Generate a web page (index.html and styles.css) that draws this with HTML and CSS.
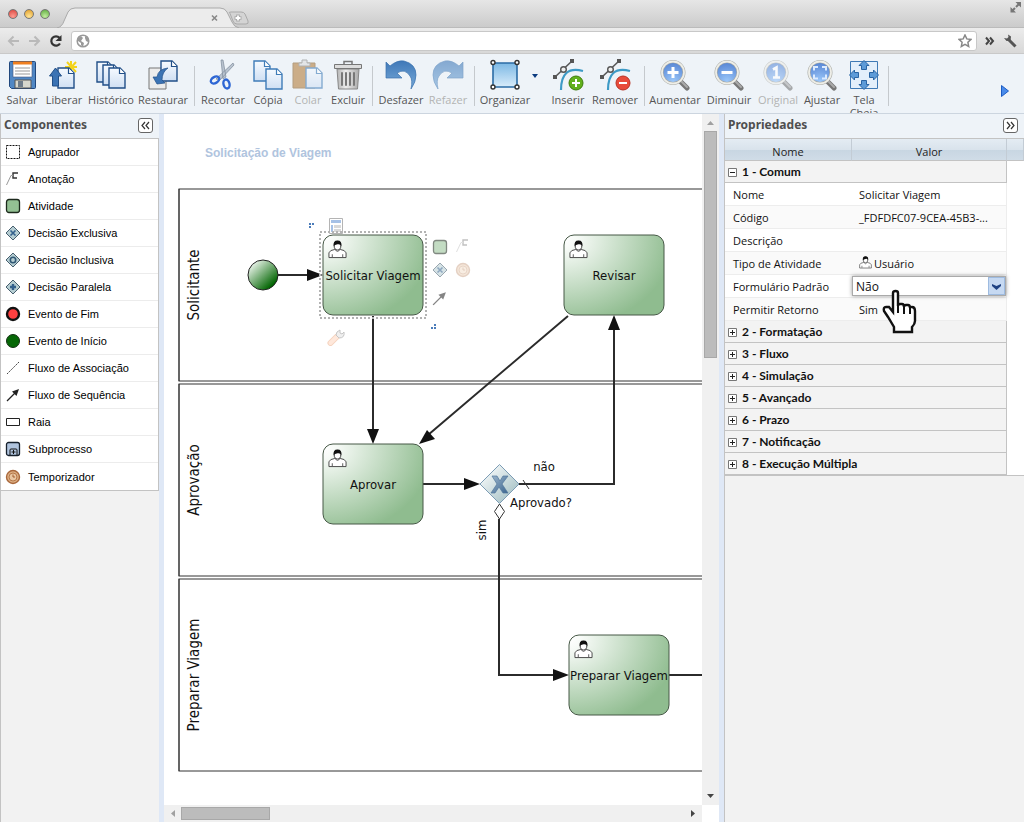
FILE: index.html
```html
<!DOCTYPE html>
<html lang="pt-BR">
<head>
<meta charset="utf-8">
<title>Editor de processos</title>
<link rel="stylesheet" href="styles.css">
</head>
<body>
<svg class="defs" aria-hidden="true">
  <defs>
    <linearGradient id="gPaper" x1="0" y1="0" x2="0" y2="1"><stop offset="0" stop-color="#f6faff"/><stop offset="1" stop-color="#cfdff3"/></linearGradient>
    <linearGradient id="gBlue" x1="0" y1="0" x2="0" y2="1"><stop offset="0" stop-color="#3f78b8"/><stop offset="1" stop-color="#79abd9"/></linearGradient>
    <linearGradient id="gFrame" x1="0" y1="0" x2="0" y2="1"><stop offset="0" stop-color="#7cb8e4"/><stop offset="1" stop-color="#d9ecfa"/></linearGradient>
    <linearGradient id="gMetal" x1="0" y1="0" x2="1" y2="0"><stop offset="0" stop-color="#b4b4b4"/><stop offset=".4" stop-color="#ececec"/><stop offset="1" stop-color="#aaa"/></linearGradient>
    <radialGradient id="gLens" cx=".5" cy=".9" r=".9"><stop offset="0" stop-color="#9cc8fa"/><stop offset="1" stop-color="#5583d2"/></radialGradient>
    <radialGradient id="gTask" cx="0" cy="0.05" r="1.1"><stop offset="0" stop-color="#fff"/><stop offset=".12" stop-color="#f6faf6"/><stop offset="1" stop-color="#8fbc8f"/></radialGradient>
    <linearGradient id="gStart" x1=".1" y1=".1" x2=".8" y2=".85"><stop offset="0" stop-color="#f4faf4"/><stop offset="1" stop-color="#006400"/></linearGradient>
    <linearGradient id="gGate" x1="0" y1="0" x2="1" y2="1"><stop offset=".2" stop-color="#eef4f5"/><stop offset=".9" stop-color="#a3bfc3"/></linearGradient>
    <linearGradient id="gX" x1="0" y1="0" x2="1" y2="1"><stop offset="0" stop-color="#9db6cc"/><stop offset="1" stop-color="#3c6690"/></linearGradient>
    <symbol id="doc" viewBox="0 0 18 22"><path d="M1 1h11l5 5v15H1z" fill="url(#gPaper)" stroke="currentColor" stroke-width="1.4"/><path d="M11.500 1v5.500H17" fill="#fff" stroke="currentColor" stroke-width="1.200"/></symbol>
    <symbol id="lens" viewBox="0 0 32 32"><path d="M21 22l7 7" stroke="#777" stroke-width="5" stroke-linecap="round"/><path d="M22 22l6 6" stroke="#aaa" stroke-width="2" stroke-linecap="round"/><circle cx="14" cy="13.500" r="11" fill="url(#gLens)" stroke="#a9aaa5" stroke-width="3"/><circle cx="14" cy="13.500" r="11" fill="none" stroke="#eeeee8" stroke-width="1.800"/></symbol>
    <symbol id="node" viewBox="0 0 32 32"><path d="M9 31C9 15 16 8 31 12" fill="none" stroke="#3d9ac6" stroke-width="2.200"/><path d="M3 18L20 2" stroke="#555" stroke-width="1.500"/><path d="M1 16h4v4H1zM18 0h4v4h-4z" fill="#555"/><circle cx="11.500" cy="10.500" r="2.800" fill="#eee" stroke="#555" stroke-width="1.400"/></symbol>
    <symbol id="user" viewBox="0 0 20 20"><path d="M1 18.500v-5q1-3 6-3.500l1-1h4l1 1q5 .5 6 3.500v5z" fill="#fff" stroke="#444"/><path d="M4.500 18v-3M15.500 18v-3M7.500 10q2.500 4 5 0" fill="none" stroke="#555"/><ellipse cx="10" cy="6" rx="3.500" ry="4.500" fill="#fff" stroke="#333"/><path d="M6 6.500Q5 .5 10 .5T14 6.500Q13 4 10 4.500T6 6.500z" fill="#111"/></symbol>
    <symbol id="gate" viewBox="0 0 16 16"><path d="M8 1l7 7-7 7-7-7z" fill="#b5cdd2" stroke="#465e6e"/></symbol>
    <symbol id="timer" viewBox="0 0 16 16"><circle cx="8" cy="8" r="6.500" fill="#dcae83" stroke="#a9683c" stroke-width="1.400"/><circle cx="8" cy="8" r="4" fill="#e9c7a3" stroke="#b67849"/><path d="M8 5.500V8h2" fill="none" stroke="#a35f30"/></symbol>
    <symbol id="note" viewBox="0 0 16 16"><path d="M13 2H8v5h4" fill="none" stroke="#333" stroke-width="1.400"/><path d="M8 4.500H6L1.500 14" fill="none" stroke="#999"/></symbol>
    <symbol id="seq" viewBox="0 0 16 16"><path d="M2 14l8-8" stroke="#222" stroke-width="1.300"/><path d="M14 2L11.500 9 7 4.500z" fill="#222"/></symbol>
    <symbol id="act" viewBox="0 0 16 16"><rect x="1.500" y="1.500" width="13" height="13" rx="2.500" fill="#93c093" stroke="#1c291c" stroke-width="1.300"/></symbol>
    <symbol id="plusbox" viewBox="0 0 9 9"><path d="M.5.5h8v8h-8z" fill="#fff" stroke="#777"/><path d="M2 4.500h5M4.500 2v5" stroke="#222"/></symbol>
    <symbol id="minusbox" viewBox="0 0 9 9"><path d="M.5.5h8v8h-8z" fill="#fff" stroke="#777"/><path d="M2 4.500h5" stroke="#222"/></symbol>
  </defs>
</svg>

<header class="browser">
  <div class="tabstrip">
    <div class="lights"><i class="light red"></i><i class="light amber"></i><i class="light green"></i></div>
    <svg class="tab" width="200" height="28" viewBox="0 0 200 28">
      <path d="M0 28Q5 27 7 21L11 12Q13 8 18 8H163Q168 8 170 12L175 22Q177 27 182 28z" fill="#ececec" stroke="#aaa"/>
      <path d="M155 15.500l5 5m0-5l-5 5" stroke="#888" stroke-width="1.600"/>
      <path d="M173 13.500Q171 12 174 12h10q3 0 4 2l3 7q1 3-2 3h-9q-3 0-4-3z" fill="#d4d4d4" stroke="#aaa"/>
      <path d="M181 14.500v7M177.500 18h7" stroke="#aaa" stroke-width="3.600"/><path d="M181 15.500v5M178.500 18h5" stroke="#fff" stroke-width="1.800"/>
    </svg>
    <svg class="expand" width="14" height="14" viewBox="0 0 14 14"><path d="M6.500 2h5.500v5.500zM1.500 7v5.500H7z" fill="#777"/><path d="M7 7l3-3M3 11l3-3" stroke="#777" stroke-width="2"/></svg>
  </div>
  <div class="navbar">
    <button class="nav" type="button" aria-label="Voltar"><svg width="13" height="12"><path d="M12 6H2M6.500 1.500L2 6l4.500 4.500" fill="none" stroke="#b9b9b9" stroke-width="2"/></svg></button>
    <button class="nav" type="button" aria-label="Avançar"><svg width="13" height="12"><path d="M1 6h10M6.500 1.500L11 6l-4.500 4.500" fill="none" stroke="#b9b9b9" stroke-width="2"/></svg></button>
    <button class="nav" type="button" aria-label="Recarregar"><svg width="14" height="14"><path d="M11 9.500A4.700 4.700 0 1 1 10.500 3.800" fill="none" stroke="#333" stroke-width="2.200"/><path d="M12.500 1v6h-6z" fill="#333"/></svg></button>
    <div class="address">
      <svg width="14" height="14"><circle cx="7" cy="7" r="5.800" fill="#fff" stroke="#999" stroke-width="1.500"/><path d="M2 4l3-2 2 2-2 3 3 2-1 4-2-2V9L2 7zM9 2l3 2v4l-2-1-1-3z" fill="#999"/></svg>
      <input class="url" type="text" aria-label="Endereço">
      <svg width="14" height="14"><path d="M7 1l1.800 3.900 4.200.5-3.100 2.900.8 4.200L7 10.400l-3.700 2.100.8-4.200L1 5.400l4.200-.5z" fill="#fff" stroke="#888" stroke-width="1.500"/></svg>
    </div>
    <svg width="10" height="10"><path d="M1 1.500L4 5 1 8.500M5 1.500L8 5 5 8.500" fill="none" stroke="#444" stroke-width="2"/></svg>
    <svg width="14" height="14"><path d="M5 5l7.500 7.500" stroke="#555" stroke-width="3"/><path d="M1 4l2.500 3 4-.5.500-4L5 .5l.5 2.500-1.500 1.500z" fill="#555"/></svg>
  </div>
</header>

<nav class="toolbar">
  <button class="tool w40" type="button"><svg width="32" height="32"><path d="M3.500 3.500q0-1 1-1h24q1 0 1 1v25q0 1-1 1h-23l-2-2z" fill="#5087c4" stroke="#20477d"/><path d="M7 3h19v15H7z" fill="#fff" stroke="#46597c" stroke-width=".6"/><path d="M7 2.500h19v3H7z" fill="#f08020"/><path d="M9 9h15M9 12h15M9 15h15" stroke="#999"/><path d="M9 21h16v8H9z" fill="#d7d7cd" stroke="#555"/><path d="M12 22h5v6h-5z" fill="#6e7c8a"/></svg>Salvar</button>
  <button class="tool w44" type="button"><svg width="32" height="32"><path d="M23 2v11M17 8h12M19 3l9 10M28 3l-9 10" stroke="#f3d31c" stroke-width="2"/><svg class="navy" x="9" y="8" width="18" height="22" preserveAspectRatio="none"><use href="#doc"/></svg><path d="M7.500 9l6 8h-3v10h-6V17h-3z" fill="#3b73b4" stroke="#214f88"/></svg>Liberar</button>
  <button class="tool w50" type="button"><svg width="32" height="32"><g class="navy"><use href="#doc" x="1" y="2" width="18" height="22"/><use href="#doc" x="7" y="5" width="18" height="22"/><use href="#doc" x="13" y="8" width="18" height="22"/></g></svg>Histórico</button>
  <button class="tool w54" type="button"><svg width="32" height="32"><path d="M2 9h17v21H2z" fill="#ececec" stroke="#777"/><use class="navy" href="#doc" x="13" y="1" width="18" height="22"/><path d="M21 9Q11 10 10 18H6l4 7 8-1-3-3q0-8 6-12z" fill="#3b73b4" stroke="#214f88" stroke-width=".7"/></svg>Restaurar</button>
  <i class="sep"></i>
  <button class="tool w50" type="button"><svg width="32" height="32"><path d="M14 1l2 0 3 17-3 2zM26 4l1 2-14 15-4-1z" fill="#b9c3cf" stroke="#7c8999" stroke-width=".7"/><ellipse cx="8" cy="21" rx="4.500" ry="3" transform="rotate(-30 8 21)" fill="none" stroke="#2d66d4" stroke-width="2.400"/><ellipse cx="19.500" cy="25" rx="3" ry="4.500" transform="rotate(-15 19.500 25)" fill="none" stroke="#2d66d4" stroke-width="2.400"/></svg>Recortar</button>
  <button class="tool w40" type="button"><svg width="32" height="32"><g class="mid"><use href="#doc" x="1" y="1" width="18" height="22"/><use href="#doc" x="13" y="9" width="18" height="22"/></g></svg>Cópia</button>
  <button class="tool w40 off" type="button"><svg width="32" height="32"><path d="M1 4h22v25H1z" fill="#b57f3e" stroke="#8d6633"/><path d="M7 4h3V1h5v3h3v3H7z" fill="#ddd" stroke="#888"/><use class="mid" href="#doc" x="13" y="8" width="18" height="22"/></svg>Colar</button>
  <button class="tool w40" type="button"><svg width="32" height="32"><path d="M5 10h22l-1.500 20h-19z" fill="url(#gMetal)" stroke="#888"/><path d="M2.500 5.500h27v4h-27z" fill="#ddd" stroke="#777"/><path d="M12 5V2.500h8V5" fill="none" stroke="#777" stroke-width="1.500"/><path d="M10 14v12M14 14v12M18 14v12M22 14v12" stroke="#777" stroke-width="2" stroke-linecap="round"/></svg>Excluir</button>
  <i class="sep"></i>
  <button class="tool w50" type="button"><svg width="32" height="32"><path d="M1 3l4 4Q12 1 19 2q12 3 12 14 0 7-5 14 2-9-1-13-5-8-13-3l5 5H1z" fill="url(#gBlue)" stroke="#3a71ae" stroke-width=".7"/></svg>Desfazer</button>
  <button class="tool w44 off" type="button"><svg width="32" height="32"><path d="M31 3l-4 4Q20 1 13 2 1 5 1 16q0 7 5 14-2-9 1-13 5-8 13-3l-5 5h16z" fill="url(#gBlue)" stroke="#3a71ae" stroke-width=".7"/></svg>Refazer</button>
  <i class="sep"></i>
  <button class="tool w54" type="button"><svg width="32" height="32"><path d="M4 4h24v24H4z" fill="url(#gFrame)" stroke="#2b6ca5" stroke-width="1.600"/><g fill="#fff" stroke="#333" stroke-width="1.400"><circle cx="4" cy="3.500" r="2"/><circle cx="28" cy="3.500" r="2"/><circle cx="4" cy="28" r="2"/><circle cx="28" cy="28" r="2"/></g></svg>Organizar</button>
  <button class="more" type="button" aria-label="Opções de organizar"><svg width="6" height="4"><path d="M0 0h6L3 4z" fill="#0b3b80"/></svg></button>
  <button class="tool w44" type="button"><svg width="32" height="32"><use href="#node" width="32" height="32"/><circle cx="24" cy="24" r="7" fill="#62b01c" stroke="#3d7d0c"/><path d="M24 20v8M20 24h8" stroke="#fff" stroke-width="2"/></svg>Inserir</button>
  <button class="tool w50" type="button"><svg width="32" height="32"><use href="#node" width="32" height="32"/><circle cx="24" cy="24" r="7" fill="#e84b3a" stroke="#b83224"/><path d="M20 24h8" stroke="#fff" stroke-width="2"/></svg>Remover</button>
  <i class="sep"></i>
  <button class="tool w54" type="button"><svg width="32" height="32"><use href="#lens" width="32" height="32"/><path d="M14 8v11M8.500 13.500h11" stroke="#fff" stroke-width="3"/></svg>Aumentar</button>
  <button class="tool w54" type="button"><svg width="32" height="32"><use href="#lens" width="32" height="32"/><path d="M8.500 13.500h11" stroke="#fff" stroke-width="3"/></svg>Diminuir</button>
  <button class="tool w44 off" type="button"><svg width="32" height="32"><use href="#lens" width="32" height="32"/><path d="M11 10.500l3.500-2v10M11 18.500h7" fill="none" stroke="#fff" stroke-width="2.600"/></svg>Original</button>
  <button class="tool w44" type="button"><svg width="32" height="32"><use href="#lens" width="32" height="32"/><path d="M8 11.500V8h4M16 8h4v3.500M20 15.500v4h-4M12 19.500H8v-4" fill="none" stroke="#dcebff" stroke-width="2"/></svg>Ajustar</button>
  <button class="tool w40" type="button"><svg width="32" height="32"><path d="M2.500 2.500h27v27h-27z" fill="#e3effb" stroke="#3e79b5"/><g fill="#5d9bd8" stroke="#2a65a4"><path id="arr" d="M16 1.500l5 5h-2.500v4h-5v-4H11z"/><use href="#arr" transform="rotate(90 16 16)"/><use href="#arr" transform="rotate(180 16 16)"/><use href="#arr" transform="rotate(270 16 16)"/></g></svg>Tela Cheia</button>
  <i class="sep"></i>
  <button class="next" type="button" aria-label="Mais ferramentas"><svg width="8" height="12"><path d="M.5.500L7.500 6 .5 11.500z" fill="#4a8bea" stroke="#1c5cc4"/></svg></button>
</nav>

<main class="work">
  <aside class="side">
    <div class="panelhead"><h2>Componentes</h2><button class="fold" type="button" aria-label="Recolher componentes"><svg width="9" height="9"><path d="M4 1L1 4.500 4 8M8 1L5 4.500 8 8" fill="none" stroke="#333" stroke-width="1.200"/></svg></button></div>
    <ul class="parts">
      <li><svg width="16" height="16"><path d="M1.500 1.500h13v13h-13z" fill="none" stroke="#111" stroke-dasharray="2 1"/></svg>Agrupador</li>
      <li><svg width="16" height="16"><use href="#note"/></svg>Anotação</li>
      <li><svg width="16" height="16"><use href="#act"/></svg>Atividade</li>
      <li><svg width="16" height="16"><use href="#gate"/><path d="M5.500 5.500l5 5m0-5l-5 5" stroke="#33608c" stroke-width="1.600"/></svg>Decisão Exclusiva</li>
      <li><svg width="16" height="16"><use href="#gate"/><circle cx="8" cy="8" r="2.700" fill="none" stroke="#315875" stroke-width="1.600"/></svg>Decisão Inclusiva</li>
      <li><svg width="16" height="16"><use href="#gate"/><path d="M8 5v6M5 8h6" stroke="#33608c" stroke-width="2.400"/></svg>Decisão Paralela</li>
      <li><svg width="16" height="16"><circle cx="8" cy="8" r="6" fill="#ff4040" stroke="#111" stroke-width="2.400"/></svg>Evento de Fim</li>
      <li><svg width="16" height="16"><circle cx="8" cy="8" r="6.500" fill="#066706" stroke="#123012"/></svg>Evento de Início</li>
      <li><svg width="16" height="16"><path d="M2 14L14 2" stroke="#444" stroke-dasharray="2 1"/></svg>Fluxo de Associação</li>
      <li><svg width="16" height="16"><use href="#seq"/></svg>Fluxo de Sequência</li>
      <li><svg width="16" height="16"><path d="M1.500 4.500h13v7h-13z" fill="#fff" stroke="#222"/></svg>Raia</li>
      <li><svg width="16" height="16"><rect x="1.500" y="1.500" width="13" height="13" rx="2" fill="#b0c4de" stroke="#16202c" stroke-width="1.300"/><path d="M5 14V9q0-1 1-1h5q1 0 1 1v5M6.500 11h4M8.500 9v4" fill="none" stroke="#111"/></svg>Subprocesso</li>
      <li><svg width="16" height="16"><use href="#timer"/></svg>Temporizador</li>
    </ul>
  </aside>
  <i class="splitter"></i>

  <section class="canvas">
    <svg class="diagram" role="img" aria-label="Solicitação de Viagem">
      <g transform="translate(-164 -114)">
        <text class="dtitle" x="205" y="157">Solicitação de Viagem</text>
        <g class="lane"><rect x="179" y="189" width="2000" height="192"/><rect x="179" y="384" width="2000" height="192"/><rect x="179" y="579" width="2000" height="192"/><path d="M179 189v192M179 384v192M179 579v192"/></g>
        <g class="lanelabel"><text transform="translate(199 285) rotate(-90)">Solicitante</text><text transform="translate(199 480) rotate(-90)">Aprovação</text><text transform="translate(199 675) rotate(-90)">Preparar Viagem</text></g>
        <g class="flow"><path d="M278 275h32M373 316v116M568 316L428 435M423 484h44M519 484h95V328M499 519v156h60M669 675h700"/></g>
        <g class="head"><path d="M323 275l-16-6v12z"/><path d="M373 444l-6-15h12z"/><path d="M419 444l8-14 8 9z"/><path d="M480 484l-16-6v12z"/><path d="M614 315l-6 15h12z"/><path d="M569 675l-16-6v12z"/></g>
        <circle cx="263" cy="275" r="15" fill="url(#gStart)" stroke="#222"/>
        <g class="task"><rect x="323" y="235" width="100" height="80" rx="10"/><rect x="564" y="235" width="100" height="80" rx="10"/><rect x="323" y="444" width="100" height="80" rx="10"/><rect x="569" y="635" width="100" height="80" rx="10"/></g>
        <use href="#user" x="328" y="240" width="19" height="19"/><use href="#user" x="569" y="240" width="19" height="19"/><use href="#user" x="328" y="449" width="19" height="19"/><use href="#user" x="574" y="640" width="19" height="19"/>
        <g class="tasklabel"><text x="373" y="280">Solicitar Viagem</text><text x="614" y="280">Revisar</text><text x="373" y="489">Aprovar</text><text x="619" y="680">Preparar Viagem</text><text x="544" y="471">não</text><text x="541" y="507">Aprovado?</text><text transform="translate(486 530) rotate(-90)">sim</text></g>
        <path d="M499.500 464.500l19.500 19.500-19.500 19.500L480 484z" fill="url(#gGate)" stroke="#7c9cb5"/>
        <path d="M492 476h5l3 5 3-5h5l-6 8 6 9h-5l-4-6-4 6h-4l6-9z" fill="url(#gX)" stroke="#52779b" stroke-width=".7"/>
        <path d="M499.500 504l5 7.500-5 7.500-5-7.500z" fill="#fff" stroke="#333"/><path d="M523 480l6 9" stroke="#333"/>
        <g class="ghost"><path d="M329.500 218.500h13v15h-13z" fill="#fff" stroke="#777"/><path d="M331 220h10v3h-10zM331 225h2v7h-2z" fill="#5f8fd2"/><path d="M334 225h7v3h-7zM334 229h7v3h-7z" fill="#bbb"/></g>
        <rect class="selection" x="320" y="232" width="106" height="86"/>
        <path d="M309 223h2v2h-2zM312 223h2v2h-2zM309 226h2v2h-2zM434 324h2v2h-2zM431 327h2v2h-2zM434 327h2v2h-2z" fill="#4b7cba"/>
        <g class="ghost"><use href="#act" x="432" y="239" width="16" height="16"/><use href="#gate" x="432" y="262" width="16" height="16"/><path d="M437.500 267.500l5 5m0-5l-5 5" stroke="#33608c" stroke-width="1.600"/><use href="#seq" x="431" y="290" width="17" height="17"/></g>
        <g class="faint"><use href="#note" x="455" y="238" width="16" height="16"/><use href="#timer" x="455" y="262" width="16" height="16"/></g>
        <g class="faint"><path d="M330.500 343l6-6" stroke="#e0702c" stroke-width="6" stroke-linecap="round"/><path d="M330.500 343l6-6" stroke="#ffb48a" stroke-width="4" stroke-linecap="round"/><path d="M336 335l1-3 3-2v3l2 1 2-2q1 6-5 6z" fill="#ccc" stroke="#444"/></g>
      </g>
    </svg>
    <div class="vbar"><svg width="8" height="5"><path d="M0 5h7L3.500 1z" fill="#a0a0a0"/></svg><i class="vthumb"></i><svg class="end" width="8" height="5"><path d="M0 0h7L3.500 4z" fill="#444"/></svg></div>
    <div class="hbar"><svg width="5" height="8"><path d="M5 0v7L1 3.500z" fill="#a0a0a0"/></svg><i class="hthumb"></i><svg class="end" width="5" height="8"><path d="M0 0v7l4-3.500z" fill="#444"/></svg></div>
  </section>
  <i class="splitter"></i>

  <aside class="props">
    <div class="panelhead"><h2>Propriedades</h2><button class="fold" type="button" aria-label="Recolher propriedades"><svg width="9" height="9"><path d="M1 1l3 3.500L1 8M5 1l3 3.500L5 8" fill="none" stroke="#333" stroke-width="1.200"/></svg></button></div>
    <div class="sheet">
      <table>
        <colgroup><col class="cname"><col><col class="cpad"></colgroup>
        <thead><tr><th>Nome</th><th>Valor</th><th></th></tr></thead>
        <tbody>
          <tr class="group"><td colspan="2"><svg width="9" height="9"><use href="#minusbox"/></svg>1 - Comum</td></tr>
          <tr><td>Nome</td><td>Solicitar Viagem</td></tr>
          <tr class="alt"><td>Código</td><td>_FDFDFC07-9CEA-45B3-...</td></tr>
          <tr><td>Descrição</td><td></td></tr>
          <tr class="alt"><td>Tipo de Atividade</td><td><svg class="mini" width="13" height="13"><use href="#user"/></svg>Usuário</td></tr>
          <tr><td><label for="form">Formulário Padrão</label></td><td class="edit">
            <span class="combo"><select id="form"><option>Não</option><option>Sim</option></select><i class="trigger"><svg width="9" height="6"><path d="M0 0l4.500 2L9 0v2L4.500 6 0 2z" fill="#1f4283"/></svg></i>
            <svg class="cursor" width="36" height="46" viewBox="0 0 36 46"><path d="M11 4q0-2 2.500-2T16 4v13q0-2 2-2h2q2 0 2 3 0-2 2-2h2q2 0 2 3 0-1 2-1 3 0 3 4v10q0 3-3 6v5H12v-5L6 28 2 22q-1-4 2-4h3l4 5z" fill="#fff" stroke="#111" stroke-width="2.400"/><path d="M16 16v8M22 18v7M28 19v6" stroke="#111" stroke-width="2"/></svg></span></td></tr>
          <tr class="alt"><td>Permitir Retorno</td><td>Sim</td></tr>
          <tr class="group"><td colspan="2"><svg width="9" height="9"><use href="#plusbox"/></svg>2 - Formatação</td></tr>
          <tr class="group"><td colspan="2"><svg width="9" height="9"><use href="#plusbox"/></svg>3 - Fluxo</td></tr>
          <tr class="group"><td colspan="2"><svg width="9" height="9"><use href="#plusbox"/></svg>4 - Simulação</td></tr>
          <tr class="group"><td colspan="2"><svg width="9" height="9"><use href="#plusbox"/></svg>5 - Avançado</td></tr>
          <tr class="group"><td colspan="2"><svg width="9" height="9"><use href="#plusbox"/></svg>6 - Prazo</td></tr>
          <tr class="group"><td colspan="2"><svg width="9" height="9"><use href="#plusbox"/></svg>7 - Notificação</td></tr>
          <tr class="group"><td colspan="2"><svg width="9" height="9"><use href="#plusbox"/></svg>8 - Execução Múltipla</td></tr>
        </tbody>
      </table>
    </div>
  </aside>
</main>
</body>
</html>
```
FILE: styles.css
```css
* { box-sizing: border-box; }
body { margin: 0; height: 100vh; display: flex; flex-direction: column; overflow: hidden; background: #f2f2f2; font-family: "Open Sans", sans-serif; font-size: 11px; }
svg { display: block; flex: none; }
button { border: 0; background: none; padding: 0; margin: 0; font: inherit; color: inherit; }
.defs { position: absolute; width: 0; height: 0; }

/* browser frame */
.browser { flex: none; }
.tabstrip { display: flex; align-items: flex-end; height: 28px; background: linear-gradient(#e6e6e6, #cbcbcb); border-bottom: 1px solid #bbb; }
.lights { display: flex; gap: 6px; padding: 0 7px 8px 8px; }
.light { width: 10px; height: 10px; border-radius: 50%; border: 1px solid #777; }
.red { background: radial-gradient(circle at 50% 80%, #ff9d92, #d9403a); }
.amber { background: radial-gradient(circle at 50% 80%, #ffe596, #e09a24); }
.green { background: radial-gradient(circle at 50% 80%, #c3eda0, #59a83a); }
.tab { margin-bottom: -1px; }
.expand { margin: 0 1px auto auto; }
.navbar { display: flex; align-items: center; height: 26px; padding: 0 7px; gap: 8px; background: linear-gradient(#ececec, #d8d8d8); border-bottom: 1px solid #c9c9c9; }
.nav { display: flex; }
.address { flex: 1; display: flex; align-items: center; height: 20px; padding: 0 4px; background: #fff; border: 1px solid #c8c8c8; border-radius: 3px; }
.url { flex: 1; min-width: 0; border: 0; outline: 0; background: none; font: inherit; }

/* toolbar */
.toolbar { flex: none; display: flex; height: 60px; padding: 5px 0 0 2px; overflow: hidden; background: #eef3f8; border-bottom: 1px solid #ccd5df; color: #555; }
.tool { flex: none; height: 64px; display: flex; flex-direction: column; align-items: center; justify-content: flex-start; gap: 2px; line-height: 13px; }
.w40 { width: 40px; }
.w44 { width: 44px; }
.w50 { width: 50px; }
.w54 { width: 54px; }
.off { color: #b3b3b3; }
.off svg { opacity: .6; }
.navy { color: #214f88; }
.mid { color: #3f7cb8; }
.sep { flex: none; width: 1px; height: 40px; margin: 7px 3px 0 4px; background: #c5c9cd; }
.more { flex: none; width: 14px; height: 34px; display: flex; align-items: center; }
.next { margin: 0 15px 0 auto; height: 64px; display: flex; align-items: center; }

/* work area */
.work { flex: 1; min-height: 0; display: flex; }
.splitter { flex: none; width: 5px; background: #dfe8f6; }
.panelhead { display: flex; align-items: center; justify-content: space-between; height: 25px; padding: 0 6px 2px 3px; background: #eef3f8; border-bottom: 1px solid #c3c3c3; }
.panelhead h2 { margin: 0; font: bold 12px/16px "Noto Sans", sans-serif; color: #4f4f4f; }
.fold { display: flex; align-items: center; justify-content: center; width: 15px; height: 15px; background: #fff; border: 1px solid #666; border-radius: 3px; }
.side { flex: none; width: 159px; border-left: 1px solid #c3c3c3; }
.parts { margin: 0; padding: 0; list-style: none; background: #fff; border: solid #c3c3c3; border-width: 0 1px 1px 0; font-family: "Liberation Sans", sans-serif; }
.parts li { display: flex; align-items: center; gap: 7px; height: 27px; padding-left: 4px; border-bottom: 1px solid #ececec; }
.parts li:last-child { border: 0; }

/* drawing surface */
.canvas { flex: 1; min-width: 0; display: grid; grid-template: 1fr 17px / 1fr 17px; background: #fff; }
.diagram { width: 100%; height: 100%; overflow: hidden; font-family: "DejaVu Sans Condensed", "DejaVu Sans", sans-serif; font-stretch: condensed; font-size: 13px; }
.dtitle { font: bold 12px "Liberation Sans", sans-serif; fill: #b0c4de; }
.lane { fill: none; stroke: #333; }
.lanelabel text, .tasklabel text { text-anchor: middle; fill: #111; }
.lanelabel { font-size: 15px; }
.flow { fill: none; stroke: #2b2b2b; stroke-width: 2; }
.head { fill: #111; }
.task { fill: url(#gTask); stroke: #465846; }
.selection { fill: none; stroke: #b3b3b3; stroke-width: 2; stroke-dasharray: 2 2; }
.ghost { opacity: .55; }
.faint { opacity: .3; }
.vbar, .hbar { display: flex; align-items: center; background: #f0f0f0; }
.vbar { flex-direction: column; padding: 6px 0; gap: 6px; }
.hbar { padding: 0 6px; gap: 6px; }
.vthumb { width: 13px; height: 33.4%; background: #bcbcbc; border: 1px solid #a8a8a8; }
.hthumb { width: 17%; height: 13px; background: #bcbcbc; border: 1px solid #a8a8a8; }
.vbar .end { margin-top: auto; }
.hbar .end { margin-left: auto; }

/* property sheet */
.props { flex: none; width: 300px; border-left: 1px solid #c3c3c3; }
.props .panelhead { padding-right: 6px; }
.sheet { background: #fff; border-bottom: 1px solid #c3c3c3; }
table { width: 100%; table-layout: fixed; border-collapse: separate; border-spacing: 0; }
.cname { width: 127px; }
.cpad { width: 17px; }
th { height: 22px; padding: 3px 0 0; font-weight: normal; color: #222; background: linear-gradient(#e4ecf3, #d9e3ec 50%, #c8d6e2 52%, #d0dce7); border-right: 1px solid #c3ccd5; border-bottom: 1px solid #c3c3c3; }
td { height: 23px; padding: 0 8px; color: #111; white-space: nowrap; border-bottom: 1px solid #ededed; }
td + td { padding: 0 7px; border-right: 1px solid #ededed; }
.alt td { background: #fafafa; }
.group td { height: 22px; padding: 0 3px; font: bold 12px/16px Lato, sans-serif; background: #f3f3f3; border-bottom: 1px solid #c3c3c3; border-right: 1px solid #c3c3c3; }
.group svg { display: inline-block; margin-right: 5px; vertical-align: -1px; }
.mini { display: inline-block; margin-right: 2px; vertical-align: -1px; }
td.edit { padding: 0; }
.combo { position: relative; display: flex; height: 20px; background: #fff; border: 1px solid #aaa; box-shadow: 0 0 4px #999; }
.combo select { flex: 1; min-width: 0; padding: 0 3px; border: 0; outline: 0; appearance: none; background: none; font: 12px "Open Sans", sans-serif; color: #111; }
.trigger { display: flex; align-items: flex-end; justify-content: center; width: 17px; padding-bottom: 4px; background: #c6d9f2; border: 1px solid #9ebbe0; }
.cursor { position: absolute; left: 29px; top: 12px; }
```
